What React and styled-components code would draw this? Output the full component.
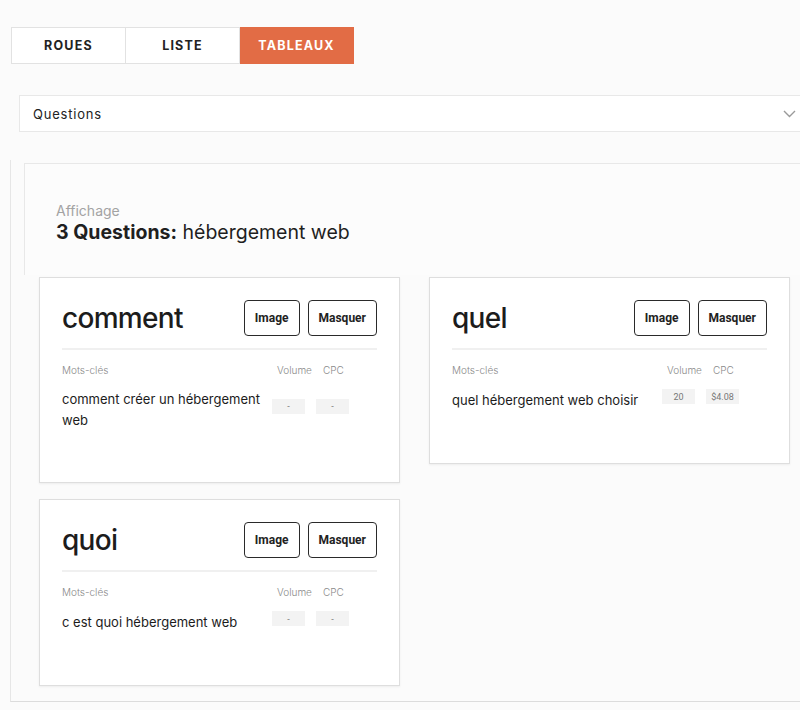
import React from 'react';
import styled, { createGlobalStyle } from 'styled-components';

const GlobalStyle = createGlobalStyle`
  body {
    margin: 0;
    background: #fbfbfb;
    font-family: Inter, "Noto Sans", sans-serif;
    color: #222;
    overflow: hidden;
  }
`;

const Page = styled.div`
  width: 830px;
  padding-top: 27px;
`;

const Tabs = styled.div`
  display: flex;
  margin-left: 11px;
`;

const Tab = styled.div`
  width: ${p => (p.first ? '115px' : '114px')};
  height: 37px;
  display: flex;
  align-items: center;
  justify-content: center;
  box-sizing: border-box;
  border: 1px solid #e2e2e2;
  border-left: ${p => (p.first ? '1px solid #e2e2e2' : 'none')};
  background: ${p => (p.active ? '#e26c45' : '#fff')};
  border-color: ${p => (p.active ? '#e26c45' : '#e2e2e2')};
  color: ${p => (p.active ? '#fff' : '#222')};
  font-size: 12.5px;
  font-weight: 700;
  letter-spacing: 1.2px;
`;

const Dropdown = styled.div`
  margin: 31px 0 0 19px;
  height: 37px;
  width: 790px;
  box-sizing: border-box;
  background: #fff;
  border: 1px solid #e8e8e8;
  display: flex;
  align-items: center;
  justify-content: space-between;
  padding: 0 12px 0 13px;
  font-size: 13px;
  letter-spacing: 0.8px;
  color: #222;
`;

const Section = styled.div`
  margin: 28px 0 0 10px;
  border-left: 1px solid #e6e6e6;
  border-bottom: 1px solid #dcdcdc;
  padding: 3px 0 15px 13px;
`;

const Heading = styled.div`
  height: 112px;
  box-sizing: border-box;
  border-top: 1px solid #e8e8e8;
  border-left: 1px solid #e8e8e8;
  background: #fcfcfc;
  padding: 38px 0 0 31px;
`;

const Kicker = styled.div`
  font-size: 14px;
  color: #a3a3a3;
  line-height: 17px;
`;

const HeadTitle = styled.div`
  font-size: 19.5px;
  line-height: 26px;
  color: #1f1f1f;
  b {
    font-weight: 700;
  }
`;

const Grid = styled.div`
  display: flex;
  flex-wrap: wrap;
  align-items: flex-start;
  gap: 16px 29px;
  margin: 2px 0 0 15px;
  width: 751px;
`;

const Card = styled.div`
  width: 361px;
  box-sizing: border-box;
  background: #fff;
  border: 1px solid #dedede;
  box-shadow: 0 1px 2px rgba(0, 0, 0, 0.06);
  padding: 22px 22px 0 22px;
`;

const CardHead = styled.div`
  display: flex;
  align-items: center;
  justify-content: space-between;
  padding-bottom: 12px;
  border-bottom: 2px solid #f0f0f0;
`;

const Word = styled.div`
  font-size: 28px;
  font-weight: 500;
  letter-spacing: -0.7px;
  color: #1c1c1c;
`;

const Actions = styled.div`
  display: flex;
  gap: 8px;
`;

const Button = styled.button`
  height: 36px;
  padding: 0 10px;
  background: #fff;
  border: 1px solid #2a2a2a;
  border-radius: 4px;
  font-family: Roboto, "Liberation Sans", sans-serif;
  font-weight: 700;
  font-size: 12px;
  color: #222;
`;

const Row = styled.div`
  display: flex;
  align-items: center;
  margin-top: ${p => (p.head ? '14px' : '13px')};
  margin-bottom: ${p => (p.head ? '0' : '51px')};
`;

const Keyword = styled.div`
  flex: 1;
  padding-right: 10px;
  font-size: ${p => (p.label ? '10px' : '13px')};
  line-height: ${p => (p.label ? '12px' : '21px')};
  color: ${p => (p.label ? '#8a8a8a' : '#1c1c1c')};
  font-weight: ${p => (p.label ? 300 : 400)};
`;

const Label = styled.div`
  width: 33px;
  box-sizing: border-box;
  margin-right: 11px;
  padding-left: ${p => p.indent}px;
  font-size: 10px;
  line-height: 12px;
  color: #8a8a8a;
  font-weight: 300;
  white-space: nowrap;
  &:last-child {
    margin-right: 28px;
  }
`;

const Value = styled.div`
  width: 33px;
  height: 15px;
  margin-right: 11px;
  margin-bottom: 8px;
  background: #f3f3f3;
  color: #777;
  font-family: Roboto, "Liberation Sans", sans-serif;
  font-size: 9px;
  display: flex;
  align-items: center;
  justify-content: center;
  &:last-child {
    margin-right: 28px;
  }
`;

const Chevron = () => (
  <svg width="13" height="8" viewBox="0 0 13 8" fill="none">
    <path d="M1 1l5.5 5.5L12 1" stroke="#9a9a9a" strokeWidth="1.4" />
  </svg>
);

const cards = [
  { word: 'comment', keyword: 'comment créer un hébergement web', volume: '-', cpc: '-' },
  { word: 'quel', keyword: 'quel hébergement web choisir', volume: '20', cpc: '$4.08' },
  { word: 'quoi', keyword: 'c est quoi hébergement web', volume: '-', cpc: '-' },
];

export default function App() {
  return (
    <Page>
      <GlobalStyle />
      <Tabs>
        <Tab first>ROUES</Tab>
        <Tab>LISTE</Tab>
        <Tab active>TABLEAUX</Tab>
      </Tabs>
      <Dropdown>
        <span>Questions</span>
        <Chevron />
      </Dropdown>
      <Section>
        <Heading>
          <Kicker>Affichage</Kicker>
          <HeadTitle>
            <b>3 Questions:</b> hébergement web
          </HeadTitle>
        </Heading>
        <Grid>
          {cards.map(c => (
            <Card key={c.word}>
              <CardHead>
                <Word>{c.word}</Word>
                <Actions>
                  <Button>Image</Button>
                  <Button>Masquer</Button>
                </Actions>
              </CardHead>
              <Row head>
                <Keyword label>Mots-clés</Keyword>
                <Label indent={5}>Volume</Label>
                <Label indent={7}>CPC</Label>
              </Row>
              <Row>
                <Keyword>{c.keyword}</Keyword>
                <Value>{c.volume}</Value>
                <Value>{c.cpc}</Value>
              </Row>
            </Card>
          ))}
        </Grid>
      </Section>
    </Page>
  );
}
